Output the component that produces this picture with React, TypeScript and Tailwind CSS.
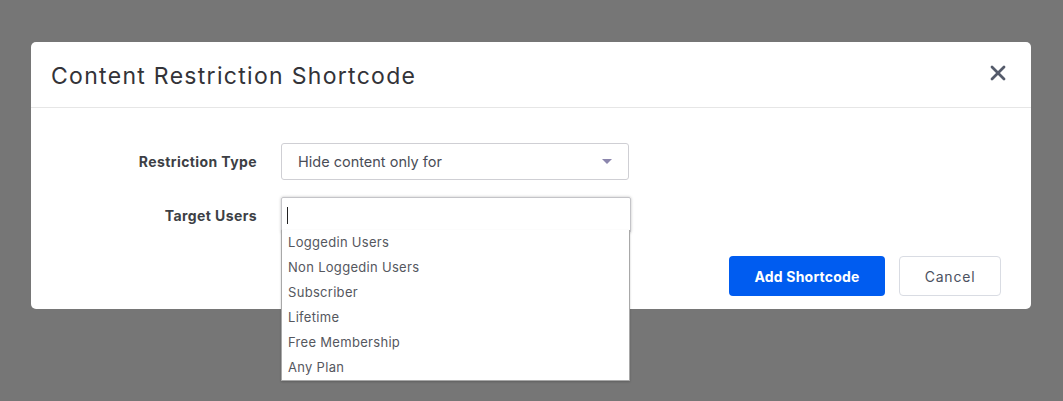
import { X } from "lucide-react";

const options = [
  "Loggedin Users",
  "Non Loggedin Users",
  "Subscriber",
  "Lifetime",
  "Free Membership",
  "Any Plan",
];

export default function App() {
  return (
    <div
      className="h-[401px] w-full bg-[#767676] pt-[42px] pl-[31px]"
      style={{ fontFamily: "Inter, 'Open Sans', sans-serif" }}
    >
      <div className="w-[1000px] rounded-[5px] bg-white">
        {/* Header */}
        <div className="flex h-[66px] items-center justify-between border-b border-[#e6e6e6] pl-5 pr-[21px]">
          <h2 className="mt-[3px] text-[23px] font-normal tracking-[1.3px] text-[#333338]">
            Content Restriction Shortcode
          </h2>
          <X className="-mt-[4px] h-[24px] w-[24px] text-[#555b6b]" strokeWidth={2.8} />
        </div>

        {/* Body */}
        <div className="pt-[35px] pb-[13px] pr-[30px]">
          <div className="flex items-center gap-6">
            <label className="w-[226px] text-right text-[14px] font-bold tracking-[0.4px] text-[#3d3f45]">
              Restriction Type
            </label>
            <div className="flex h-[37px] w-[348px] items-center justify-between rounded-[3px] border border-[#cfcfd4] pl-4 pr-4">
              <span className="text-[14.5px] text-[#4a4d57]">Hide content only for</span>
              <span className="h-0 w-0 border-x-[5px] border-t-[5px] border-x-transparent border-t-[#8b86ad]" />
            </div>
          </div>

          <div className="mt-[17px] flex items-center gap-6">
            <label className="w-[226px] text-right text-[14px] font-bold tracking-[0.4px] text-[#3d3f45]">
              Target Users
            </label>
            <div className="relative">
              <div className="flex h-[36px] w-[350px] items-center rounded-[2px] border border-[#c4c4c8] pl-[5px] shadow-[0_0_3px_rgba(0,0,0,0.25)]">
                <span className="h-[17px] w-px bg-[#222]" />
              </div>
              {/* Dropdown */}
              <ul className="absolute left-0 top-[33px] z-10 w-[349px] border border-[#a8a8a8] border-t-0 bg-white shadow-[0_1px_2px_rgba(0,0,0,0.2)]">
                {options.map((o) => (
                  <li key={o} className="flex h-[25px] items-center pl-[6px] text-[13px] tracking-[0.3px] text-[#55575e]">
                    {o}
                  </li>
                ))}
              </ul>
            </div>
          </div>

          <div className="mt-[23px] flex justify-end gap-[14px]">
            <button className="h-[40px] w-[156px] rounded-[4px] bg-[#005cf0] text-[14px] font-bold tracking-[0.2px] text-white">
              Add Shortcode
            </button>
            <button className="h-[40px] w-[102px] rounded-[4px] border border-[#d9dce3] bg-white text-[14px] tracking-[0.8px] text-[#4b5160]">
              Cancel
            </button>
          </div>
        </div>
      </div>
    </div>
  );
}
